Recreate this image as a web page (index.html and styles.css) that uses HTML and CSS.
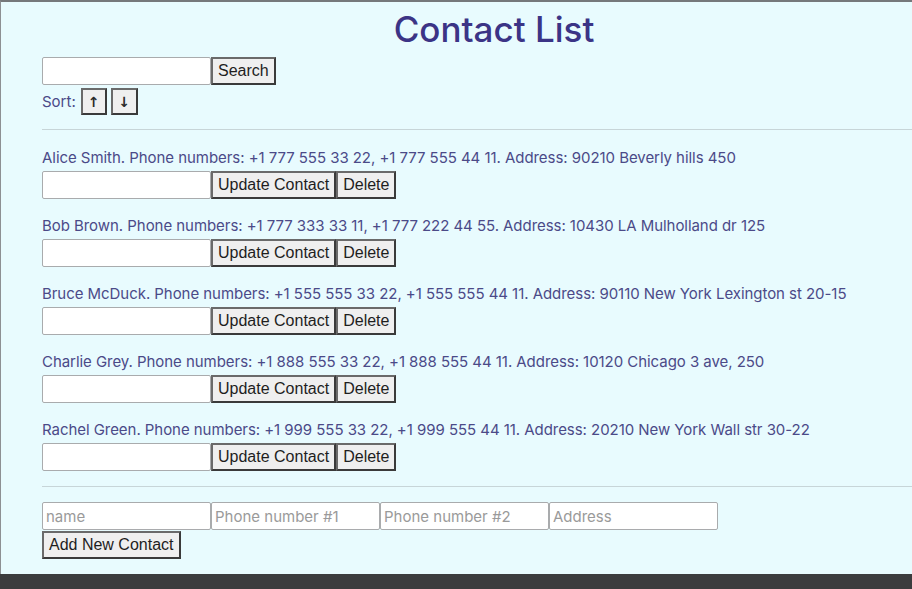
FILE: index.html
```html
<!DOCTYPE html>
<html lang="en">
<head>
<meta charset="utf-8">
<title>Contact List</title>
<link rel="stylesheet" href="styles.css">
</head>
<body>
<div class="page">
  <h1 class="title">Contact List</h1>
  <div class="search-row">
    <input class="field" type="text">
    <button class="btn">Search</button>
  </div>
  <div class="sort-row">
    <span class="label">Sort:</span>
    <button class="btn btn-icon">&#8593;</button>
    <button class="btn btn-icon">&#8595;</button>
  </div>
  <hr class="rule">
  <ul class="contacts">
    <li class="contact">
      <div class="contact-text">Alice Smith. Phone numbers: +1 777 555 33 22, +1 777 555 44 11. Address: 90210 Beverly hills 450</div>
      <div class="contact-actions"><input class="field" type="text"><button class="btn">Update Contact</button><button class="btn">Delete</button></div>
    </li>
    <li class="contact">
      <div class="contact-text">Bob Brown. Phone numbers: +1 777 333 33 11, +1 777 222 44 55. Address: 10430 LA Mulholland dr 125</div>
      <div class="contact-actions"><input class="field" type="text"><button class="btn">Update Contact</button><button class="btn">Delete</button></div>
    </li>
    <li class="contact">
      <div class="contact-text">Bruce McDuck. Phone numbers: +1 555 555 33 22, +1 555 555 44 11. Address: 90110 New York Lexington st 20-15</div>
      <div class="contact-actions"><input class="field" type="text"><button class="btn">Update Contact</button><button class="btn">Delete</button></div>
    </li>
    <li class="contact">
      <div class="contact-text">Charlie Grey. Phone numbers: +1 888 555 33 22, +1 888 555 44 11. Address: 10120 Chicago 3 ave, 250</div>
      <div class="contact-actions"><input class="field" type="text"><button class="btn">Update Contact</button><button class="btn">Delete</button></div>
    </li>
    <li class="contact">
      <div class="contact-text">Rachel Green. Phone numbers: +1 999 555 33 22, +1 999 555 44 11. Address: 20210 New York Wall str 30-22</div>
      <div class="contact-actions"><input class="field" type="text"><button class="btn">Update Contact</button><button class="btn">Delete</button></div>
    </li>
  </ul>
  <hr class="rule rule-bottom">
  <div class="new-row">
    <input class="field" type="text" placeholder="name">
    <input class="field" type="text" placeholder="Phone number #1">
    <input class="field" type="text" placeholder="Phone number #2">
    <input class="field" type="text" placeholder="Address">
  </div>
  <button class="btn btn-add">Add New Contact</button>
</div>
</body>
</html>
```
FILE: styles.css
```css
html, body {
  margin: 0;
  padding: 0;
}
body {
  background: #3b3c3e;
  height: 589px;
  overflow: hidden;
  font-family: Inter, "Noto Sans", sans-serif;
}
.page {
  box-sizing: border-box;
  width: 946px;
  height: 574px;
  background: #e8fbfe;
  border-top: 2px solid #75787b;
  border-left: 1px solid #8d9093;
  padding-left: 41px;
  color: #4b4a88;
}
.title {
  margin: 0;
  padding-top: 5px;
  height: 50px;
  text-align: center;
  font-size: 35px;
  font-weight: 500;
  line-height: 44px;
  color: #3b3486;
}
.search-row,
.sort-row,
.contact-actions,
.new-row {
  display: flex;
  align-items: center;
}
.search-row {
  height: 28px;
}
.sort-row {
  height: 31px;
  gap: 4px;
  padding-top: 2px;
  box-sizing: border-box;
}
.label {
  font-size: 15px;
  margin-right: 1px;
}
.field {
  box-sizing: border-box;
  width: 169px;
  height: 28px;
  margin: 0;
  border: 1px solid #a9abad;
  border-radius: 2px;
  background: #ffffff;
  padding: 1px 3px;
  font-family: Inter, sans-serif;
  font-size: 15px;
  color: #333;
}
.field::placeholder {
  color: #9a9a9a;
}
.btn {
  box-sizing: border-box;
  height: 28px;
  margin: 0;
  padding: 0 5px;
  background: #efefef;
  border: 2px solid #3a3a3a;
  border-top-color: #6a6a6a;
  border-left-color: #6a6a6a;
  font-family: "Liberation Sans", Arial, sans-serif;
  font-size: 16px;
  color: #1e1e1e;
}
.btn-icon {
  width: 26px;
  height: 27px;
  padding: 0;
  font-family: "DejaVu Sans", sans-serif;
  font-size: 14px;
  font-weight: bold;
  color: #2a2a2a;
}
.btn-icon + .btn-icon {
  width: 27px;
}
.rule {
  margin: 13px 0 0 0;
  border: 0;
  border-top: 1px solid #c7d5d8;
  height: 0;
}
.contacts {
  list-style: none;
  margin: 0;
  padding: 15px 0 0 0;
}
.contact {
  margin-bottom: 14px;
}
.contact:last-child {
  margin-bottom: 0;
}
.contact-text {
  font-size: 15px;
  letter-spacing: -0.05px;
  line-height: 26px;
  height: 26px;
  white-space: nowrap;
}
.rule-bottom {
  margin-top: 15px;
}
.new-row {
  margin-top: 15px;
}
.btn-add {
  margin-top: 1px;
  padding: 0 5px;
}
```
